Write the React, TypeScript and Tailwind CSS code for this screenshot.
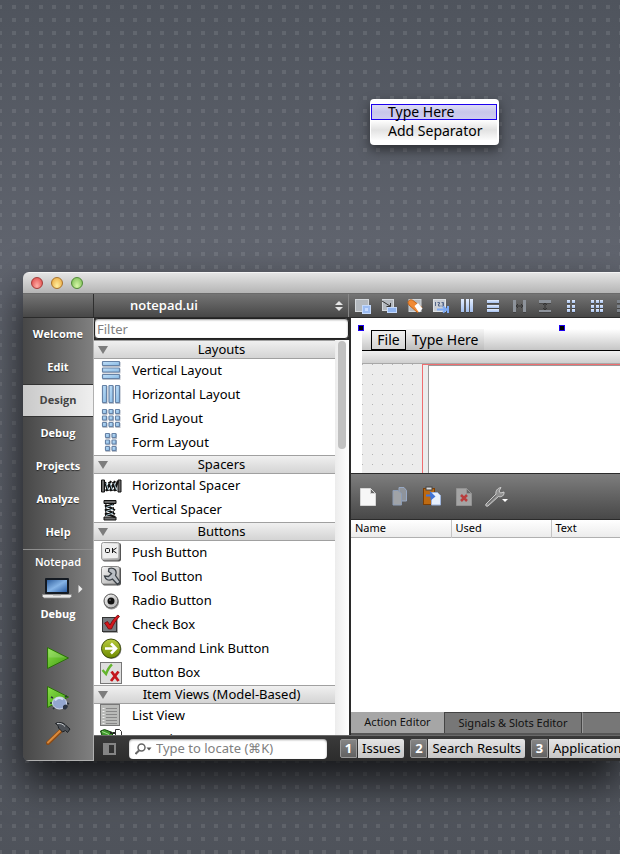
import React, { useState } from "react";

type IconProps = { children: React.ReactNode; size?: number };

type WidgetItem = {
  label: string;
  icon: React.ReactNode;
};

type WidgetGroup = {
  title: string;
  items: WidgetItem[];
};

const Icon = ({ children, size = 24 }: IconProps) => (
  <svg
    width={size}
    height={size}
    viewBox={`0 0 ${size} ${size}`}
    className="shrink-0"
    aria-hidden="true"
  >
    {children}
  </svg>
);

// Shared gradients for every icon on the page
const Gradients = () => (
  <svg width="0" height="0" className="absolute" aria-hidden="true">
    <defs>
      <linearGradient id="blue" x1="0" y1="0" x2="1" y2="1">
        <stop offset="0" stopColor="#c5e2fa" />
        <stop offset="1" stopColor="#86b9e4" />
      </linearGradient>
      <linearGradient id="pale" x1="0" y1="0" x2="0" y2="1">
        <stop offset="0" stopColor="#e4eeff" />
        <stop offset="1" stopColor="#a3bfee" />
      </linearGradient>
      <linearGradient id="metal" x1="0" y1="0" x2="1" y2="1">
        <stop offset="0" stopColor="#f6f6f6" />
        <stop offset="1" stopColor="#a9a9a9" />
      </linearGradient>
      <linearGradient id="green" x1="0" y1="0" x2="1" y2="1">
        <stop offset="0" stopColor="#8be04a" />
        <stop offset="1" stopColor="#3f9a10" />
      </linearGradient>
      <linearGradient id="olive" x1="0" y1="0" x2="0" y2="1">
        <stop offset="0" stopColor="#b9cc3e" />
        <stop offset="1" stopColor="#6d8a00" />
      </linearGradient>
      <linearGradient id="screen" x1="0" y1="0" x2="1" y2="1">
        <stop offset="0" stopColor="#2f5f9e" />
        <stop offset="0.5" stopColor="#86b4e6" />
        <stop offset="1" stopColor="#2a5ca3" />
      </linearGradient>
    </defs>
  </svg>
);

const Blocks = ({ rects }: { rects: number[][] }) => (
  <Icon>
    {rects.map(([x, y, w, h], i) => (
      <g key={i}>
        <rect x={x + 0.5} y={y + 1} width={w} height={h} fill="#8f98a6" opacity="0.6" />
        <rect
          x={x + 0.5}
          y={y + 0.5}
          width={w - 1}
          height={h - 1}
          rx="0.5"
          fill="url(#blue)"
          stroke="#6682a6"
          strokeWidth="1.2"
        />
      </g>
    ))}
  </Icon>
);

const Spring = () => (
  <g>
    <path d="M1.5 6h3v12h-3zM18 6h3v12h-3z" fill="#6a6a6a" stroke="#111" />
    <path
      d="M5 8l3 9M6 17l5-10M9 8l3 9M10 17l5-10M13 8l3 9M14 17l4-10"
      fill="none"
      stroke="#111"
      strokeWidth="2.2"
    />
    <path d="M6 9l2.500 7M10 9l2.500 7M14 9l2.500 7" stroke="#a9c8d4" strokeWidth="1" />
  </g>
);

const groups: WidgetGroup[] = [
  {
    title: "Layouts",
    items: [
      {
        label: "Vertical Layout",
        icon: <Blocks rects={[[2, 2, 18, 5], [2, 8.5, 18, 5], [2, 15, 18, 5]]} />,
      },
      {
        label: "Horizontal Layout",
        icon: <Blocks rects={[[2, 2, 5, 18], [8.5, 2, 5, 18], [15, 2, 5, 18]]} />,
      },
      {
        label: "Grid Layout",
        icon: (
          <Blocks
            rects={[
              [2, 2, 5, 5], [8.5, 2, 5, 5], [15, 2, 5, 5],
              [2, 8.5, 5, 5], [8.5, 8.5, 5, 5], [15, 8.5, 5, 5],
              [2, 15, 5, 5], [8.5, 15, 5, 5], [15, 15, 5, 5],
            ]}
          />
        ),
      },
      {
        label: "Form Layout",
        icon: (
          <Blocks
            rects={[
              [5, 2, 5, 5], [11.5, 2, 5, 5],
              [5, 8.5, 5, 5], [11.5, 8.5, 5, 5],
              [5, 15, 5, 5], [11.5, 15, 5, 5],
            ]}
          />
        ),
      },
    ],
  },
  {
    title: "Spacers",
    items: [
      { label: "Horizontal Spacer", icon: <Icon><Spring /></Icon> },
      {
        label: "Vertical Spacer",
        icon: (
          <Icon>
            <g transform="rotate(90 10.5 11.5)"><Spring /></g>
          </Icon>
        ),
      },
    ],
  },
  {
    title: "Buttons",
    items: [
      {
        label: "Push Button",
        icon: (
          <Icon>
            <rect x="2.500" y="2" width="18.500" height="18.500" rx="2" fill="#555" />
            <rect x="1.500" y="1.500" width="18" height="17.500" rx="2" fill="url(#metal)" stroke="#999" />
            <rect x="3" y="3" width="15" height="14" rx="1" fill="#eee" />
            <rect x="5.500" y="7.500" width="4" height="4" rx="1" fill="none" stroke="#111" />
            <path d="M12.500 7v5M16.500 7l-4 2.500 4 2.500" fill="none" stroke="#111" />
          </Icon>
        ),
      },
      {
        label: "Tool Button",
        icon: (
          <Icon>
            <rect x="2.500" y="2" width="18.500" height="18.500" rx="2" fill="#555" />
            <rect x="1.500" y="1.500" width="18" height="17.500" rx="2" fill="url(#metal)" stroke="#888" />
            <path
              d="M9 3.500c5-1.500 8.500 2 6.500 7l4.500 6.500-2.500 2.500-5-5.500c-4 2.500-7 .500-8-3l4 .500 3-3-3-2z"
              fill="#b9bec4"
              stroke="#3b4147"
              strokeWidth="1.300"
            />
          </Icon>
        ),
      },
      {
        label: "Radio Button",
        icon: (
          <Icon>
            <circle cx="11.500" cy="13" r="7.500" fill="#999" />
            <circle cx="11" cy="12" r="7" fill="url(#metal)" stroke="#555" />
            <circle cx="11" cy="12" r="3.500" fill="#111" />
            <circle cx="10" cy="11" r="1" fill="#555" />
          </Icon>
        ),
      },
      {
        label: "Check Box",
        icon: (
          <Icon>
            <rect x="3" y="5" width="15" height="15" fill="#aaa" />
            <rect x="2.500" y="4.500" width="14" height="14" fill="#777b80" stroke="#333" />
            <path
              d="M4.500 10l3-1.500 2.500 3.500c2-4 5-8 8-10l1.500 1.500c-3.500 3.500-6 8-8 12.500h-3z"
              fill="#d4161c"
              stroke="#6d0a0d"
              strokeWidth="0.800"
            />
          </Icon>
        ),
      },
      {
        label: "Command Link Button",
        icon: (
          <Icon>
            <circle cx="11.500" cy="12" r="10" fill="#8a8a8a" />
            <circle cx="11" cy="11.500" r="9.500" fill="url(#olive)" stroke="#40500a" />
            <path d="M5 11.500h10M11 6.500l5 5-5 5" fill="none" stroke="#fff" strokeWidth="2.600" />
          </Icon>
        ),
      },
      {
        label: "Button Box",
        icon: (
          <Icon>
            <rect x="0.500" y="1.500" width="21" height="21" fill="#dedede" stroke="#777" />
            <path d="M2.500 9l3.500 4c1.500-4 3-7 6-9.500" fill="none" stroke="#63b52c" strokeWidth="2.400" />
            <path d="M11.500 10.500l7 9.500M18.500 10.500l-7.500 9.500" fill="none" stroke="#c4161c" strokeWidth="2.800" />
          </Icon>
        ),
      },
    ],
  },
  {
    title: "Item Views (Model-Based)",
    items: [
      {
        label: "List View",
        icon: (
          <Icon>
            <rect x="0.500" y="0.500" width="19" height="21" fill="#b9bab8" stroke="#777" />
            <path
              d="M6 4.500h11M6 7.500h11M6 10.500h11M6 13.500h11M6 16.500h11M6 19.500h11"
              stroke="#888"
            />
            <path
              d="M2.500 4.500h2M2.500 7.500h2M2.500 10.500h2M2.500 13.500h2M2.500 16.500h2M2.500 19.500h2"
              stroke="#eee"
            />
          </Icon>
        ),
      },
      {
        label: "Tree View",
        icon: (
          <Icon>
            <path d="M0.500 3l4-1.500 8 3v6H3z" fill="#3f9a2c" stroke="#12430a" />
            <path d="M2 3.500l7 3" stroke="#a5e090" />
            <path d="M10 5h6" stroke="#222" strokeWidth="2" strokeDasharray="2 1" />
            <path d="M15.500 1.500h4l2 2V12h-6z" fill="#fff" stroke="#333" />
          </Icon>
        ),
      },
    ],
  },
];

const modes = ["Welcome", "Edit", "Design", "Debug", "Projects", "Analyze", "Help"];

const panes = ["Issues", "Search Results", "Application Output"];

const bars = (rects: number[][], fill = "url(#pale)") =>
  rects.map(([x, y, w, h], i) => (
    <g key={i}>
      <rect x={x} y={y + 1} width={w} height={h} fill="#333" opacity="0.500" />
      <rect x={x} y={y} width={w} height={h} fill={fill} />
    </g>
  ));

const designTools: { label: string; art: React.ReactNode }[] = [
  {
    label: "Edit Widgets",
    art: (
      <>
        <rect x="0.500" y="1.500" width="13" height="12" fill="#b4b9bf" stroke="#d4d8dc" />
        <rect x="7.500" y="7.500" width="8" height="8" fill="#9dbdf2" stroke="#c4d9fb" />
        <rect x="10" y="10" width="3" height="3" fill="#c9dcff" />
      </>
    ),
  },
  {
    label: "Edit Signals/Slots",
    art: (
      <>
        <rect x="1.500" y="1.500" width="11" height="11" fill="#b4b9bf" stroke="#d4d8dc" />
        <rect x="6.500" y="9.500" width="9" height="5" fill="#8fb4f0" stroke="#c4d9fb" />
        <path d="M1 3l8 5M5.500 8.500H9.500V5" fill="none" stroke="#333" />
      </>
    ),
  },
  {
    label: "Edit Buddies",
    art: (
      <>
        <rect x="2" y="1.500" width="12" height="12" fill="#b4b9bf" stroke="#d0d4d8" />
        <path d="M1 5c0-3 3-4 5-2.500l9 7-4.500 5L2 7z" fill="#f08a35" stroke="#c4661a" />
        <path d="M7.500 8l3.500-3 4.500 5.500-3.500 4z" fill="#fff" />
      </>
    ),
  },
  {
    label: "Edit Tab Order",
    art: (
      <>
        <rect x="0.500" y="1.500" width="12" height="12" fill="#c9cdd3" stroke="#dde1e5" />
        <path
          d="M2.500 4v4M4.500 4.500h2v1.500h-1v2h2M8.500 4.500h2v3.500H8.500M9 6h1.500"
          fill="none"
          stroke="#54678a"
        />
        <path d="M4 11.500h8M10 8.500l3.500 3-3.500 3M15 8v7" fill="none" stroke="#7caaf5" strokeWidth="2" />
      </>
    ),
  },
  { label: "Lay Out Horizontally", art: bars([[2, 1, 3, 13], [7, 1, 3, 13], [11, 1, 3, 13]]) },
  { label: "Lay Out Vertically", art: bars([[2, 2, 12, 3], [2, 7, 12, 3], [2, 11, 12, 3]]) },
  {
    label: "Horizontal Splitter",
    art: (
      <>
        {bars([[2, 2, 3, 12], [12, 2, 3, 12]], "#8d939b")}
        <path d="M5 8h7M7 6L5 8l2 2M10 6l2 2-2 2" fill="none" stroke="#333" />
      </>
    ),
  },
  {
    label: "Vertical Splitter",
    art: (
      <>
        {bars([[2, 2, 12, 3], [2, 12, 12, 2]], "#8d939b")}
        <path d="M8 5v7M6 7l2-2 2 2M6 10l2 2 2-2" fill="none" stroke="#333" />
      </>
    ),
  },
  {
    label: "Form Layout",
    art: bars([[4, 2, 3, 3], [9, 2, 3, 3], [4, 7, 3, 3], [9, 7, 3, 3], [4, 11, 3, 3], [9, 11, 3, 3]]),
  },
  {
    label: "Grid Layout",
    art: bars([
      [2, 2, 3, 3], [7, 2, 3, 3], [11, 2, 3, 3],
      [2, 7, 3, 3], [7, 7, 3, 3], [11, 7, 3, 3],
      [2, 11, 3, 3], [7, 11, 3, 3], [11, 11, 3, 3],
    ]),
  },
  { label: "Break Layout", art: bars([[2, 2, 12, 3], [2, 7, 12, 3], [2, 11, 12, 3]], "#7d838b") },
];

const actionTools: { label: string; art: React.ReactNode }[] = [
  {
    label: "New",
    art: (
      <path d="M4.500 3.500h10l5 5v12h-15z M14.500 3.500v5h5" fill="#f7f7f7" stroke="#d6d6d6" />
    ),
  },
  {
    label: "Copy",
    art: (
      <>
        <path d="M11 2.500h5l2.500 3V16h-7.500z" fill="#8f949b" stroke="#97a8c4" />
        <path d="M5 5.500h5l3.500 3V20H5z" fill="#a0a3a7" stroke="#8c9cb5" />
      </>
    ),
  },
  {
    label: "Paste",
    art: (
      <>
        <rect x="3.500" y="3.500" width="11" height="16" fill="#bd6a12" stroke="#7a3e05" />
        <rect x="6" y="2" width="6" height="3" fill="#ddd" stroke="#444" />
        <path d="M11.500 7.500h6l3 3V20h-9z" fill="#e8f0fc" stroke="#9db4dc" />
        <path d="M6 10.500h6.500M11 8.500l3 3-2.500 2z" fill="#3f74d8" stroke="#3f74d8" strokeWidth="2" />
      </>
    ),
  },
  {
    label: "Delete",
    art: (
      <>
        <path d="M4.500 3.500h10l5 5v12h-15z M14.500 3.500v5h5" fill="#a4a4a4" stroke="#929292" />
        <path d="M9 10l6 6M15 10l-6 6" stroke="#b93e3e" strokeWidth="2.500" />
      </>
    ),
  },
];

const DownTriangle = () => (
  <svg width="10" height="8" viewBox="0 0 10 8" className="shrink-0" aria-hidden="true">
    <path d="M0 0h10L5 8z" fill="#7d7d7d" />
  </svg>
);

const PopupMenu = () => (
  <div
    role="menu"
    className="ml-[370px] w-[129px] rounded bg-white py-[5px] pr-[2px] pl-px text-[14px] shadow-[0_5px_12px_rgba(0,0,0,0.5)]"
  >
    <button
      role="menuitem"
      className="block h-4 w-full border border-[#1c00ef] bg-linear-to-b from-[#dddcf6] via-[#c8c6ea] to-[#cfcdf0] pl-4 text-left leading-[14px]"
    >
      Type Here
    </button>
    <button
      role="menuitem"
      className="block h-5 w-full bg-linear-to-b from-white via-[#e2e2e2] to-[#fbfbfb] pl-[17px] text-left leading-[22px]"
    >
      Add Separator
    </button>
  </div>
);

const TitleBar = () => (
  <div className="flex h-[21px] items-center gap-2 border-t border-[#f4f4f4] bg-linear-to-b from-[#e4e4e4] to-[#b5b5b5] pl-2">
    <button
      aria-label="Close"
      className="size-3 rounded-full border border-[#a33b38] bg-radial-[at_50%_80%] from-[#ffb0a8] to-[#dd4040]"
    />
    <button
      aria-label="Minimize"
      className="size-3 rounded-full border border-[#a9722a] bg-radial-[at_50%_80%] from-[#fff0a0] to-[#e9a338]"
    />
    <button
      aria-label="Zoom"
      className="size-3 rounded-full border border-[#4f8a35] bg-radial-[at_50%_80%] from-[#d8f8a8] to-[#73b84e]"
    />
  </div>
);

const ToolBar = () => (
  <div className="flex h-[25px] border-y border-t-[#6b6b6b] border-b-[#2b2b2b] bg-linear-to-b from-[#757575] to-[#474747]">
    <div className="w-[71px] shrink-0 border-r border-[#2f2f2f]" />
    <div className="flex w-[255px] shrink-0 items-center border-r border-[#888] pr-[5px] pl-9">
      <select
        aria-label="Open document"
        className="h-5 flex-1 appearance-none bg-transparent font-['Open_Sans','Noto_Sans',sans-serif] text-[13px] font-semibold text-white outline-none"
      >
        <option>notepad.ui</option>
      </select>
      <svg width="8" height="12" viewBox="0 0 8 12" aria-hidden="true">
        <path d="M0 5l4-4 4 4zM0 7l4 4 4-4z" fill="#e6e6e6" />
      </svg>
    </div>
    <div className="flex min-w-0 flex-1 items-center gap-[10px] overflow-hidden pl-[6px]">
      {designTools.map((tool) => (
        <button key={tool.label} aria-label={tool.label} className="shrink-0">
          <Icon size={16}>{tool.art}</Icon>
        </button>
      ))}
    </div>
  </div>
);

const ModeBar = () => {
  const [active, setActive] = useState("Design");

  return (
    <nav className="flex w-[71px] shrink-0 flex-col border-r border-b border-[#b0b0b0] bg-linear-to-r from-[#474747] to-[#808080] font-['Open_Sans','Noto_Sans',sans-serif] text-[11px] font-bold text-white">
      {modes.map((mode) => (
        <button
          key={mode}
          onClick={() => setActive(mode)}
          className={
            mode === active
              ? "h-[33px] border-y border-[#333] bg-linear-to-r from-[#c9c9c9] to-[#efefef] text-[#444]"
              : "h-[33px] text-shadow-[0_1px_1px_rgba(0,0,0,0.6)]"
          }
        >
          {mode}
        </button>
      ))}
      <div className="flex flex-1 flex-col items-center border-t border-[#8e8e8e]">
        <div className="mt-1 h-4 leading-4 font-semibold">Notepad</div>
        <button aria-label="Select target" className="mt-2 ml-2 flex items-center gap-[6px]">
          <svg width="30" height="22" viewBox="0 0 30 22" aria-hidden="true">
            <rect x="3" y="0" width="24" height="16" rx="1" fill="#141a22" />
            <rect x="5" y="2" width="20" height="12" fill="url(#screen)" />
            <path d="M0.500 16.500h29v2l-1.500 1.500H2L0.500 18.500z" fill="#e8e8e8" stroke="#888" strokeWidth="0.800" />
            <path d="M11 16.500h8v1h-8z" fill="#999" />
          </svg>
          <svg width="5" height="8" viewBox="0 0 5 8" aria-hidden="true">
            <path d="M0.500 0v8l4-4z" fill="#eee" />
          </svg>
        </button>
        <div className="mt-1 h-5 leading-5">Debug</div>
        <button aria-label="Run" className="mt-[22px]">
          <Icon size={26}>
            <path d="M2.500 1.500v21l21-10.500z" fill="url(#green)" stroke="#2c720b" />
            <path d="M3.500 3l17 8.500H3.500z" fill="#fff" opacity="0.150" />
          </Icon>
        </button>
        <button aria-label="Start debugging" className="mt-[13px]">
          <Icon size={26}>
            <path d="M2.500 1.500v21l21-10.500z" fill="url(#green)" stroke="#2c720b" />
            <path
              d="M8 13l-2-1M7 18H5M10 22l-2 2M20 12l2-1M22 18l2 1M19 22l2 2"
              stroke="#28303c"
              strokeWidth="1.500"
            />
            <ellipse cx="14.500" cy="18" rx="7" ry="6" fill="#93a6cf" stroke="#d0daee" />
            <path d="M18 21c1.500-2 3.500-2 5 0-1 3-3 4-5 3z" fill="#2b3442" />
            <path d="M10 15.500c2-3 5-3.500 8-1" fill="none" stroke="#d4def2" strokeWidth="2" />
          </Icon>
        </button>
        <button aria-label="Build" className="mt-[10px]">
          <Icon size={26}>
            <path d="M16 9.500L3 22" stroke="#8a4a14" strokeWidth="4" strokeLinecap="round" />
            <path d="M16 9L3 21.500" stroke="#d98a3d" strokeWidth="2" strokeLinecap="round" />
            <path
              d="M10.500 2.500c4-2 8-1 10.500 2l4 3.500-2.500 3.500-2-2-3 1.500-4-4c0-2-1-3-3-4.500z"
              fill="#4c5056"
              stroke="#1d2024"
            />
            <path d="M12 2.500c3-.500 6 .500 8 3" fill="none" stroke="#c4c8cc" />
          </Icon>
        </button>
      </div>
    </nav>
  );
};

const WidgetBox = () => (
  <div className="w-[257px] shrink-0 border-r-2 border-[#2b2b2b] bg-white">
    <div className="bg-[#2b2b2b] pb-px">
      <input
        type="text"
        aria-label="Filter"
        placeholder="Filter"
        className="block h-[21px] w-full rounded-sm border border-[#222] bg-white pl-[2px] text-[13px] leading-[19px] inset-shadow-[0_1px_2px_rgba(0,0,0,0.4)] outline-none placeholder:text-[#808080]"
      />
    </div>
    <div className="flex h-[395px] overflow-hidden">
      <div className="min-w-0 flex-1">
        {groups.map((group) => (
          <section key={group.title}>
            <button className="flex h-[19px] w-full items-center border-y border-[#a0a0a0] bg-linear-to-b from-[#f0f0f0] to-[#d4d4d4] pl-1 text-[13px] leading-[17px]">
              <DownTriangle />
              <span className="flex-1 text-center">{group.title}</span>
            </button>
            <ul>
              {group.items.map((item) => (
                <li key={item.label}>
                  <button className="flex h-6 w-full items-center gap-2 pl-[6px] text-[13px]">
                    {item.icon}
                    {item.label}
                  </button>
                </li>
              ))}
            </ul>
          </section>
        ))}
      </div>
      <div className="w-[14px] bg-linear-to-r from-[#ececec] to-white px-[3px] pt-px">
        <div className="h-[108px] rounded-full bg-[#c1c1c1]" />
      </div>
    </div>
  </div>
);

const FormEditor = () => (
  <div className="h-[155px] bg-white pt-[11px] pl-[11px]">
    <div className="relative flex h-full flex-col">
      <div className="absolute -top-1 -left-1 size-[6px] border border-[#1c00ef] bg-black" />
      <div className="absolute -top-1 left-[197px] size-[6px] border border-[#1c00ef] bg-black" />
      <div className="flex h-[22px] items-stretch border-b border-black bg-linear-to-b from-white to-[#c6c6c6] pl-[9px] text-[14px]">
        <button className="mt-px w-[35px] border border-black bg-linear-to-b from-[#f0f0f0] to-[#d4d4d4] leading-[18px]">
          File
        </button>
        <button className="bg-linear-to-b from-[#f6f6f6] to-[#bcbcbc] px-[6px] leading-[22px]">
          Type Here
        </button>
      </div>
      <div className="h-[13px] border-b border-[#a8a8a8] bg-linear-to-b from-[#f0f0f0] to-[#cfcfcf]" />
      <div className="flex flex-1 bg-[#ececec] bg-[conic-gradient(from_270deg_at_1px_1px,#b4b4b4_90deg,transparent_0)] bg-size-[10px_10px] pl-[60px]">
        <div className="flex-1 border-t border-l border-[#ef6d70] pl-[5px]">
          <div className="h-full border-t border-l border-[#9a9a9a] bg-white" />
        </div>
      </div>
    </div>
  </div>
);

const ActionEditor = () => (
  <>
    <div className="flex h-[47px] items-center gap-2 border-t border-b border-[#2b2b2b] bg-linear-to-b from-[#7e7e7e] to-[#484848] pl-[5px]">
      {actionTools.map((tool) => (
        <button key={tool.label} aria-label={tool.label}>
          <Icon>{tool.art}</Icon>
        </button>
      ))}
      <button aria-label="Configure">
        <svg width="26" height="24" viewBox="0 0 26 24" aria-hidden="true">
          <path
            d="M2 19L12 9c-.700-3 1.500-6 5-6.500l-2 3.500 1.500 2 3.500-1c.500 3.500-2.500 5.500-5.500 4.500L4 21c-1.500 1-3-.500-2-2z"
            fill="#8f8f8f"
            stroke="#e0e0e0"
            strokeWidth="0.800"
          />
          <path d="M4 18.500l8-8" stroke="#555" />
          <path d="M18 14h6l-3 3z" fill="#fff" />
        </svg>
      </button>
    </div>
    <div className="flex-1 bg-white">
      <table className="w-full table-fixed border-collapse text-left text-[11px]">
        <thead className="bg-linear-to-b from-white to-[#ececec]">
          <tr className="h-[17px] border-b border-[#b0b0b0] leading-4">
            <th className="w-[100px] border-r border-[#c4c4c4] p-0 pl-1 font-normal">Name</th>
            <th className="w-[100px] border-r border-[#c4c4c4] p-0 pl-1 font-normal">Used</th>
            <th className="p-0 pl-1 font-normal">Text</th>
          </tr>
        </thead>
        <tbody />
      </table>
    </div>
    <div role="tablist" className="flex h-[23px] border-b-2 border-[#555] bg-[#777] text-[11px] text-[#111]">
      <button role="tab" aria-selected="true" className="w-[93px] shrink-0 bg-[#a6a6a6]">
        Action Editor
      </button>
      <button
        role="tab"
        aria-selected="false"
        className="w-[138px] shrink-0 border-x border-t border-[#444] bg-[#777]"
      >
        Signals &amp; Slots Editor
      </button>
      <div className="flex-1 border-t border-l border-t-[#444] border-l-[#9a9a9a]" />
    </div>
  </>
);

const StatusBar = () => (
  <div className="flex h-[26px] items-center overflow-hidden border-t border-[#6a6a6a] bg-linear-to-b from-[#3a3a3a] to-[#2c2c2c] pl-[9px] text-[13px]">
    <button aria-label="Toggle sidebar" className="flex h-3 w-[13px] shrink-0 border-2 border-[#858585]">
      <span className="h-full w-1 bg-[#858585]" />
    </button>
    <label className="ml-[13px] flex h-5 w-[198px] shrink-0 items-center gap-1 rounded-sm bg-white pl-[6px] inset-shadow-[0_1px_2px_rgba(0,0,0,0.4)]">
      <svg width="17" height="12" viewBox="0 0 17 12" className="shrink-0" aria-hidden="true">
        <circle cx="6.500" cy="4.500" r="3.500" fill="none" stroke="#666" strokeWidth="1.500" />
        <path d="M4 7.500L0.500 11" stroke="#666" strokeWidth="2" />
        <path d="M11.500 4.500h5l-2.500 3z" fill="#555" />
      </svg>
      <input
        type="text"
        aria-label="Locate"
        placeholder="Type to locate (⌘K)"
        className="w-full min-w-0 bg-transparent text-[13px] outline-none placeholder:text-[#808080]"
      />
    </label>
    <div className="ml-[13px] flex gap-[6px]">
      {panes.map((pane, i) => (
        <button key={pane} className="flex h-[19px] shrink-0 leading-[19px]">
          <span className="w-[17px] rounded-l-xs border border-[#999] bg-linear-to-b from-[#858585] to-[#626262] text-center leading-[17px] font-bold text-white">
            {i + 1}
          </span>
          <span className="ml-px rounded-r-xs bg-linear-to-b from-[#e4e4e4] to-[#c6c6c6] px-1 whitespace-nowrap">
            {pane}
          </span>
        </button>
      ))}
    </div>
  </div>
);

export default function App() {
  return (
    <div className="min-h-screen overflow-hidden bg-linear-to-b from-[#4f545d] via-[#60646e] via-30% to-[#4f535b] font-['Noto_Sans','Open_Sans',sans-serif] text-black">
      <Gradients />
      {/* Desktop with its grid of small squares */}
      <div className="min-h-screen bg-[conic-gradient(from_270deg_at_4px_4px,#ffffff18_90deg,transparent_0),conic-gradient(from_270deg_at_4px_4px,#ffffff18_90deg,transparent_0)] bg-size-[27px_13px] bg-position-[12px_5px,25px_5px] pt-[99px] pb-[93px]">
        <PopupMenu />
        <main className="mt-[127px] ml-[23px] flex flex-col overflow-hidden rounded-l-md shadow-[0_20px_40px_rgba(0,0,0,0.75)]">
          <TitleBar />
          <ToolBar />
          <div className="flex">
            <ModeBar />
            <div className="flex min-w-0 flex-1 flex-col">
              <div className="flex">
                <WidgetBox />
                <div className="flex min-w-0 flex-1 flex-col">
                  <FormEditor />
                  <ActionEditor />
                </div>
              </div>
              <StatusBar />
            </div>
          </div>
        </main>
      </div>
    </div>
  );
}
